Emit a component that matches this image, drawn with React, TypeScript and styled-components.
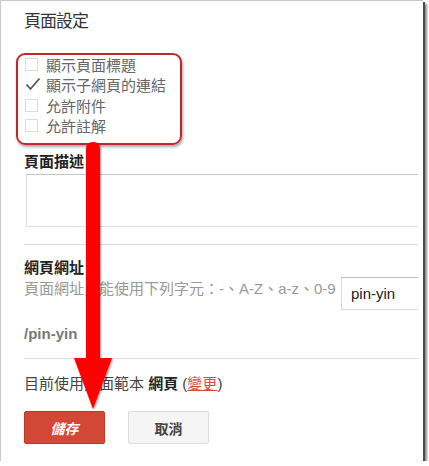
import React from "react";
import styled, { createGlobalStyle } from "styled-components";

const Global = createGlobalStyle`
  html, body { margin: 0; padding: 0; background: #ffffff; }
  body { font-family: "Liberation Sans", "Noto Sans CJK TC", sans-serif; }
`;

const Frame = styled.div`
  position: relative;
  box-sizing: border-box;
  width: 423px;
  height: 461px;
  background: #fff;
  border-top: 1px solid #c9c9c9;
  border-left: 1px solid #c9c9c9;
  box-shadow: 2px 2px 0 #4a4a4a, 4px 4px 2px rgba(0, 0, 0, 0.45);
  overflow: visible;
`;

const Content = styled.div`
  box-sizing: border-box;
  width: 417px;
  padding-left: 23px;
  overflow: hidden;
  display: flex;
  flex-direction: column;
`;

const Title = styled.div`
  margin-top: 11px;
  font-size: 17px;
  line-height: 20px;
  color: #333;
  letter-spacing: -1px;
`;

const CheckList = styled.div`
  margin-top: 22px;
  display: flex;
  flex-direction: column;
`;

const CheckRow = styled.label`
  display: flex;
  align-items: center;
  height: 20.5px;
  font-size: 15px;
  color: #666;
  gap: 8px;
`;

const Box = styled.span<{ $checked?: boolean }>`
  box-sizing: border-box;
  width: 13px;
  height: 13px;
  margin-left: 1px;
  border: 1px solid ${(p) => (p.$checked ? "transparent" : "#dcdcdc")};
  position: relative;
  flex: none;
`;

const Check = styled.svg`
  position: absolute;
  left: -1px;
  top: -3px;
`;

const Label = styled.div<{ $top: number }>`
  margin-top: ${(p) => p.$top}px;
  font-size: 15px;
  line-height: 18px;
  font-weight: bold;
  color: #222;
`;

const TextArea = styled.div`
  box-sizing: border-box;
  margin-top: 3px;
  margin-left: 2px;
  width: 400px;
  height: 53px;
  border: 1px solid #dedede;
  border-top-color: #c4c4c4;
`;

const Rule = styled.div<{ $top: number }>`
  margin-top: ${(p) => p.$top}px;
  height: 1px;
  background: #dcdcdc;
  width: 400px;
`;

const UrlRow = styled.div`
  display: flex;
  align-items: flex-start;
`;

const Helper = styled.div`
  flex: none;
  width: 317px;
  padding-top: 2px;
  font-size: 15px;
  line-height: 20px;
  color: #999;
  white-space: nowrap;
  overflow: hidden;
`;

const Input = styled.div`
  flex: none;
  box-sizing: border-box;
  width: 90px;
  height: 33px;
  border: 1px solid #d9d9d9;
  border-top-color: #c0c0c0;
  padding-left: 9px;
  font-size: 15px;
  line-height: 31px;
  color: #222;
`;

const Path = styled.div`
  margin-top: 15px;
  font-size: 15px;
  line-height: 18px;
  font-weight: bold;
  color: #777;
`;

const Footer = styled.div`
  margin-top: 15px;
  font-size: 15px;
  line-height: 20px;
  color: #444;
  b { color: #222; }
`;

const Change = styled.span`
  color: #dd4b39;
  text-decoration: underline;
`;

const Buttons = styled.div`
  margin-top: 17px;
  display: flex;
  gap: 23px;
`;

const Button = styled.div<{ $primary?: boolean }>`
  box-sizing: border-box;
  width: 81px;
  height: 33px;
  border-radius: 2px;
  display: flex;
  align-items: center;
  justify-content: center;
  font-size: 14px;
  font-weight: bold;
  background: ${(p) => (p.$primary ? "#d14836" : "#f5f5f5")};
  border: 1px solid ${(p) => (p.$primary ? "#c53727" : "#dcdcdc")};
  color: ${(p) => (p.$primary ? "#fff" : "#444")};
  font-style: ${(p) => (p.$primary ? "italic" : "normal")};
`;

const Highlight = styled.div`
  position: absolute;
  left: 15px;
  top: 52px;
  width: 166px;
  height: 92px;
  box-sizing: border-box;
  border: 2px solid #c3272d;
  border-radius: 9px;
  box-shadow: 1px 2px 3px rgba(0, 0, 0, 0.35);
  pointer-events: none;
`;

const Arrow = styled.svg`
  position: absolute;
  left: 68px;
  top: 138px;
  pointer-events: none;
  overflow: visible;
`;

const items = [
  { text: "顯示頁面標題", checked: false },
  { text: "顯示子網頁的連結", checked: true },
  { text: "允許附件", checked: false },
  { text: "允許註解", checked: false },
];

export default function App() {
  return (
    <>
      <Global />
      <Frame>
        <Content>
          <Title>頁面設定</Title>
          <CheckList>
            {items.map((it) => (
              <CheckRow key={it.text}>
                <Box $checked={it.checked}>
                  {it.checked && (
                    <Check width="16" height="16" viewBox="0 0 16 16">
                      <path d="M1.5 8.5 L5.5 13 L14.5 2.5" fill="none" stroke="#555" strokeWidth="1.8" />
                    </Check>
                  )}
                </Box>
                {it.text}
              </CheckRow>
            ))}
          </CheckList>
          <Label $top={17}>頁面描述</Label>
          <TextArea />
          <Rule $top={17} />
          <Label $top={14}>網頁網址</Label>
          <UrlRow>
            <Helper>頁面網址只能使用下列字元：-、A-Z、a-z、0-9</Helper>
            <Input>pin-yin</Input>
          </UrlRow>
          <Path>/pin-yin</Path>
          <Rule $top={15} />
          <Footer>
            目前使用頁面範本 <b>網頁</b> (<Change>變更</Change>)
          </Footer>
          <Buttons>
            <Button $primary>儲存</Button>
            <Button>取消</Button>
          </Buttons>
        </Content>
        <Highlight />
        <Arrow width="50" height="275" viewBox="0 0 50 275">
          <defs>
            <filter id="sh" x="-30%" y="-5%" width="160%" height="110%">
              <feDropShadow dx="1" dy="1" stdDeviation="1" floodColor="#000" floodOpacity="0.45" />
            </filter>
          </defs>
          <g filter="url(#sh)">
            <path
              d="M17 10 Q17 3 24 3 Q31 3 31 10 L31 219 L43 219 L24 270 L5 219 L17 219 Z"
              fill="#ff0000"
            />
          </g>
        </Arrow>
      </Frame>
    </>
  );
}
